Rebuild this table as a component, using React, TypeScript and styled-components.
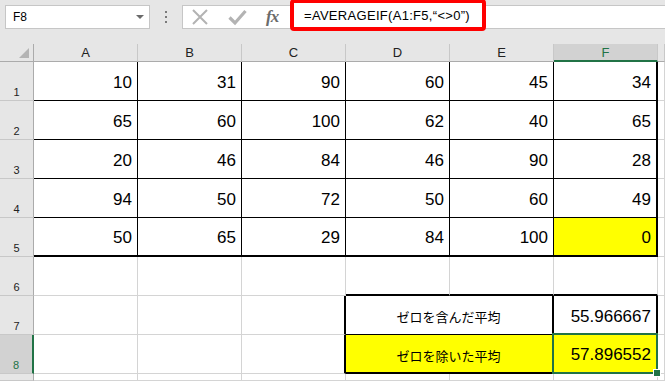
import React from 'react'
import styled, { createGlobalStyle, css } from 'styled-components'

const GlobalStyle = createGlobalStyle`
  html, body {
    margin: 0;
    padding: 0;
    background: #ffffff;
  }
  body {
    width: 665px;
    height: 381px;
    overflow: hidden;
    font-family: "Liberation Sans", "Noto Sans CJK JP", sans-serif;
  }
`

const GREEN = '#217346'
const GRID = '#d4d4d4'
const HEAD_BG = '#e6e6e6'

type Edge = 'grid' | 'thin' | 'thick'

const edge = (e: Edge) =>
  e === 'thick' ? '2px solid #000' : e === 'thin' ? '1px solid #000' : `1px solid ${GRID}`

const Screen = styled.div`
  display: flex;
  flex-direction: column;
  width: 665px;
  height: 381px;
  background: ${HEAD_BG};
`

const FormulaBar = styled.div`
  display: flex;
  align-items: center;
  height: 44px;
  padding: 0 0 10px 5px;
  box-sizing: border-box;
`

const NameBox = styled.div`
  display: flex;
  align-items: center;
  justify-content: space-between;
  width: 145px;
  height: 24px;
  box-sizing: border-box;
  background: #fff;
  border: 1px solid #c6c6c6;
  padding: 0 5px 0 7px;
  font-size: 12px;
  color: #000;
`

const DropArrow = styled.span`
  width: 0;
  height: 0;
  border-left: 4px solid transparent;
  border-right: 4px solid transparent;
  border-top: 4px solid #6a6a6a;
`

const Grip = styled.div`
  display: flex;
  flex-direction: column;
  gap: 3px;
  width: 32px;
  align-items: center;
  span {
    width: 2px;
    height: 2px;
    background: #7a7a7a;
  }
`

const IconBox = styled.div`
  display: flex;
  align-items: center;
  gap: 19px;
  width: 108px;
  height: 24px;
  box-sizing: border-box;
  background: #fff;
  border: 1px solid #c6c6c6;
  border-right: none;
  padding-left: 8px;
`

const Fx = styled.span`
  font-family: "Liberation Serif", serif;
  font-style: italic;
  font-weight: bold;
  font-size: 17px;
  color: #6b6b6b;
  letter-spacing: -1px;
`

const FormulaField = styled.div`
  flex: 1;
  display: flex;
  align-items: center;
  height: 24px;
  box-sizing: border-box;
  background: #fff;
  border-top: 1px solid #c6c6c6;
  border-bottom: 1px solid #c6c6c6;
`

const Highlight = styled.div`
  display: flex;
  align-items: center;
  width: 196px;
  height: 32px;
  margin: -6px 0 -2px;
  box-sizing: border-box;
  border: 4px solid #ff0000;
  border-radius: 4px;
  background: #fff;
  padding-left: 10px;
  font-size: 13px;
  letter-spacing: 0.3px;
  color: #000;
  white-space: nowrap;
`

const Sheet = styled.div`
  flex: 1;
  display: grid;
  grid-template-columns: 34px repeat(6, 104px) 1fr;
  grid-template-rows: 18px repeat(8, 39px) 1fr;
  background: #fff;
`

const Corner = styled.div`
  position: relative;
  background: ${HEAD_BG};
  border-right: 1px solid #ababab;
  border-bottom: 1px solid #ababab;
  &::after {
    content: '';
    position: absolute;
    right: 4px;
    bottom: 3px;
    width: 0;
    height: 0;
    border-left: 10px solid transparent;
    border-bottom: 10px solid #b4b4b4;
  }
`

const ColHead = styled.div<{ $active?: boolean }>`
  display: flex;
  align-items: center;
  justify-content: center;
  box-sizing: border-box;
  background: ${HEAD_BG};
  border-right: 1px solid #c8c8c8;
  border-bottom: 1px solid #ababab;
  font-size: 13px;
  color: #222;
  ${(p) =>
    p.$active &&
    css`
      background: #d2d2d2;
      color: ${GREEN};
      border-bottom: 2px solid ${GREEN};
    `}
`

const RowHead = styled.div<{ $active?: boolean }>`
  display: flex;
  align-items: flex-end;
  justify-content: center;
  box-sizing: border-box;
  padding-bottom: 2px;
  background: ${HEAD_BG};
  border-right: 1px solid #ababab;
  border-bottom: 1px solid #c8c8c8;
  font-size: 11px;
  color: #222;
  ${(p) =>
    p.$active &&
    css`
      background: #d2d2d2;
      color: ${GREEN};
      border-right: 2px solid ${GREEN};
    `}
`

const Cell = styled.div<{ $right?: Edge; $bottom?: Edge; $bg?: string; $span?: number; $center?: boolean }>`
  position: relative;
  display: flex;
  align-items: center;
  justify-content: ${(p) => (p.$center ? 'center' : 'flex-end')};
  box-sizing: border-box;
  padding: 3px 5px 0 0;
  grid-column: span ${(p) => p.$span || 1};
  background: ${(p) => p.$bg || '#fff'};
  border-right: ${(p) => edge(p.$right || 'grid')};
  border-bottom: ${(p) => edge(p.$bottom || 'grid')};
  font-size: 17px;
  color: #000;
`

const Label = styled.span`
  font-family: "Noto Sans CJK JP", sans-serif;
  font-size: 13px;
  padding-left: 4px;
`

const Selection = styled.div`
  position: absolute;
  z-index: 2;
  top: -2px;
  left: -2px;
  right: -2px;
  bottom: -2px;
  border: 2px solid ${GREEN};
  pointer-events: none;
  &::after {
    content: '';
    position: absolute;
    right: -5px;
    bottom: -5px;
    width: 6px;
    height: 6px;
    background: ${GREEN};
    border: 1px solid #fff;
  }
`

const data = [
  [10, 31, 90, 60, 45, 34],
  [65, 60, 100, 62, 40, 65],
  [20, 46, 84, 46, 90, 28],
  [94, 50, 72, 50, 60, 49],
  [50, 65, 29, 84, 100, 0],
]

const cols = ['A', 'B', 'C', 'D', 'E', 'F']

const CrossIcon = () => (
  <svg width="18" height="18" viewBox="0 0 18 18">
    <path d="M2 2 L16 16 M16 2 L2 16" stroke="#b3b3b3" strokeWidth="2" fill="none" />
  </svg>
)

const CheckIcon = () => (
  <svg width="19" height="18" viewBox="0 0 19 18">
    <path d="M1.5 9.5 L7 15 L17.5 3" stroke="#b3b3b3" strokeWidth="3.2" fill="none" strokeLinejoin="miter" />
  </svg>
)

export default function App() {
  return (
    <Screen>
      <GlobalStyle />
      <FormulaBar>
        <NameBox>
          F8
          <DropArrow />
        </NameBox>
        <Grip>
          <span />
          <span />
          <span />
        </Grip>
        <IconBox>
          <CrossIcon />
          <CheckIcon />
          <Fx>fx</Fx>
        </IconBox>
        <FormulaField>
          <Highlight>=AVERAGEIF(A1:F5,“&lt;&gt;0”)</Highlight>
        </FormulaField>
      </FormulaBar>

      <Sheet>
        <Corner />
        {cols.map((c) => (
          <ColHead key={c} $active={c === 'F'}>
            {c}
          </ColHead>
        ))}
        <ColHead />

        {data.map((row, r) => (
          <React.Fragment key={r}>
            <RowHead>{r + 1}</RowHead>
            {row.map((v, c) => (
              <Cell
                key={c}
                $right={c === 5 ? 'thick' : 'thin'}
                $bottom={r === 4 ? 'thick' : 'thin'}
                $bg={r === 4 && c === 5 ? '#ffff00' : undefined}
              >
                {v}
              </Cell>
            ))}
            <Cell />
          </React.Fragment>
        ))}

        <RowHead>6</RowHead>
        <Cell />
        <Cell />
        <Cell />
        <Cell $bottom="thick" />
        <Cell $bottom="thick" />
        <Cell $bottom="thick" />
        <Cell />

        <RowHead>7</RowHead>
        <Cell />
        <Cell />
        <Cell $right="thick" />
        <Cell $span={2} $center $right="thick" $bottom="thin">
          <Label>ゼロを含んだ平均</Label>
        </Cell>
        <Cell $right="thick" $bottom="thin">
          55.966667
        </Cell>
        <Cell />

        <RowHead $active>8</RowHead>
        <Cell />
        <Cell />
        <Cell $right="thick" />
        <Cell $span={2} $center $right="thick" $bottom="thick" $bg="#ffff00">
          <Label>ゼロを除いた平均</Label>
        </Cell>
        <Cell $right="thick" $bottom="thick" $bg="#ffff00">
          57.896552
          <Selection />
        </Cell>
        <Cell />

        <RowHead />
        {cols.map((c) => (
          <Cell key={c} />
        ))}
        <Cell />
      </Sheet>
    </Screen>
  )
}
